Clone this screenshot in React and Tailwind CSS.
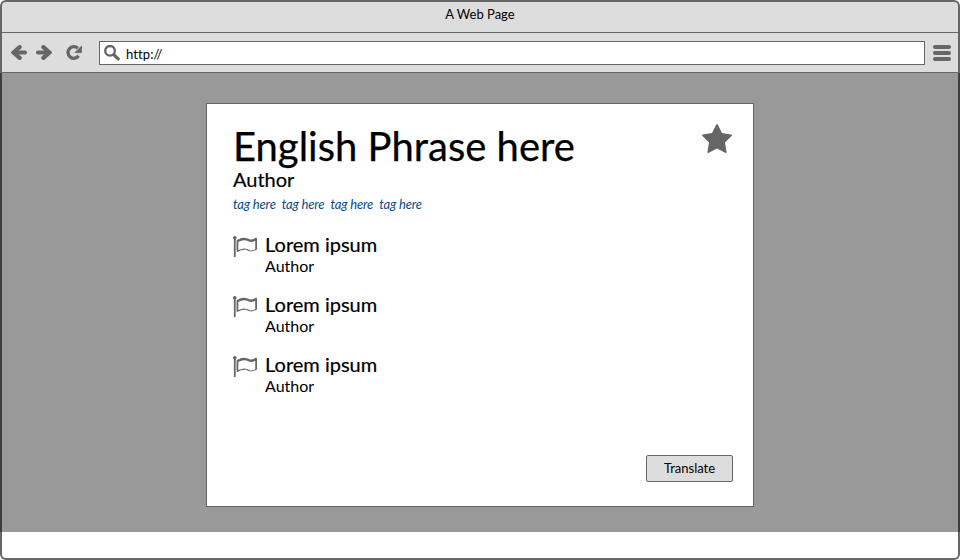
const ICONS = {
  star: {
    box: '64 32 1664 1587',
    d: 'M1728 647q0 22-26 48l-363 354 86 500q1 7 1 20 0 21-10.5 35.5t-30.5 14.5q-19 0-40-12l-449-236-449 236q-22 12-40 12-21 0-31.5-14.5t-10.5-35.5q0-6 2-20l86-500-364-354q-25-27-25-48 0-37 56-46l502-73 225-455q19-41 49-41t49 41l225 455 502 73q56 9 56 46z',
  },
  flag: {
    box: '64 128 1728 1536',
    d: 'M1664 1095v-616q-169 91-306 91-82 0-145-32-100-49-184-76.5t-178-27.5q-173 0-403 127v599q245-113 433-113 55 0 103.5 7.5t98 26 77 31 82.5 39.5l28 14q44 22 101 22 120 0 293-92zm-1344-839q0 35-17.5 64t-46.5 46v1266q0 14-9 23t-23 9h-64q-14 0-23-9t-9-23v-1266q-29-17-46.5-46t-17.5-64q0-53 37.5-90.5t90.5-37.5 90.5 37.5 37.5 90.5zm1472 64v763q0 39-35 57-10 5-17 9-218 116-369 116-88 0-158-35l-28-14q-64-33-99-48t-91-29-114-14q-102 0-235.5 44t-228.5 102q-15 9-33 9-16 0-32-8-32-19-32-56v-742q0-35 31-55 35-21 78.5-42.5t114-52 152.5-49.5 155-19q112 0 209 31t209 86q38 19 89 19 122 0 310-112 22-12 31-17 31-16 62 2 31 20 31 55z',
  },
};

function Icon({ name, className }) {
  const { box, d } = ICONS[name];
  return (
    <svg viewBox={box} preserveAspectRatio="none" fill="currentColor" className={`shrink-0 text-[#666] ${className}`}>
      <path d={d} />
    </svg>
  );
}

function Arrow({ className }) {
  return (
    <svg viewBox="0 0 16 15" fill="none" stroke="#666" className={`h-[15px] w-4 shrink-0 ${className}`}>
      <path d="M8.6 2.2 2.6 7.5l6 5.3" strokeWidth="4.3" strokeLinecap="round" />
      <path d="M3.5 7.5h10.6" strokeWidth="3.8" strokeLinecap="round" />
    </svg>
  );
}

function Reload({ className }) {
  return (
    <svg viewBox="0 0 16 15" className={`h-[15px] w-4 shrink-0 ${className}`}>
      <path d="M12.6 10.8A5.8 5.8 0 1 1 11.8 3.3" fill="none" stroke="#666" strokeWidth="3.3" />
      <path d="M15.6 1v6.6H9z" fill="#666" stroke="#666" strokeWidth="0.8" strokeLinejoin="round" />
    </svg>
  );
}

function Search({ className }) {
  return (
    <svg viewBox="0 0 16 16" fill="none" stroke="#666" className={`h-4 w-4 shrink-0 ${className}`}>
      <circle cx="6" cy="5.8" r="4.8" strokeWidth="2.3" />
      <path d="m10 9.8 4.2 4" strokeWidth="3.2" strokeLinecap="round" />
    </svg>
  );
}

function Translation() {
  return (
    <li className="flex h-[60px]">
      <Icon name="flag" className="mt-1 h-[21px] w-6" />
      <div className="ml-2">
        <p className="h-6 text-[20px] leading-6 [-webkit-text-stroke:0.2px]">Lorem ipsum</p>
        <p className="h-5 text-[16px] leading-[19px]">Author</p>
      </div>
    </li>
  );
}

export default function App() {
  return (
    <div className="flex h-[560px] w-[960px] flex-col overflow-hidden whitespace-nowrap rounded-[6px] bg-[#666] font-['Lato',sans-serif] text-black">
      <header className="mx-0.5 mt-0.5 h-[30px] shrink-0 rounded-t-[4px] bg-[#ddd] text-center text-[13px] leading-6">
        A Web Page
      </header>
      <nav className="mx-0.5 mt-px flex h-[39px] shrink-0 items-start bg-[#ddd] pt-2">
        <Arrow className="ml-[9px] mt-1" />
        <Arrow className="ml-[9px] mt-1 rotate-180" />
        <Reload className="ml-[14px] mt-1" />
        <div className="ml-[17px] flex h-6 w-[826px] items-start border border-[#666] bg-white">
          <Search className="ml-1 mt-[3px]" />
          <span className="ml-1.5 text-[13px] leading-6 tracking-[0.1px] [font-variant-ligatures:none]">http://</span>
        </div>
        <div className="ml-2 mt-1 flex flex-col gap-[2px]">
          <span className="h-1 w-[18px] rounded-full bg-[#666]" />
          <span className="h-1 w-[18px] rounded-full bg-[#666]" />
          <span className="h-1 w-[18px] rounded-full bg-[#666]" />
        </div>
      </nav>
      <div className="mt-px h-[459px] shrink-0 bg-[#3d3d3d] px-0.5">
        <main className="flex h-full justify-center bg-[#999] pt-[30px]">
          <section className="flex h-[404px] w-[548px] flex-col border border-[#666] bg-white pl-[26px] pr-5 pt-5">
            <div className="flex h-[45px] justify-between">
              <h1 className="text-[40px] leading-[45px] [-webkit-text-stroke:0.25px]">English Phrase here</h1>
              <Icon name="star" className="mr-px h-[29px] w-[30px]" />
            </div>
            <p className="h-[23px] text-[20px] leading-5 [-webkit-text-stroke:0.2px]">Author</p>
            <div className="flex h-6 gap-[6px] text-[13px] italic leading-6 tracking-[-0.16px] text-[#074b8c]">
              <span>tag here</span>
              <span>tag here</span>
              <span>tag here</span>
              <span>tag here</span>
            </div>
            <ul className="mt-4">
              <Translation />
              <Translation />
              <Translation />
            </ul>
            <button className="mb-6 mt-auto h-[27px] w-[87px] self-end rounded-[2px] border border-[#666] bg-[#ddd] text-[13px] leading-[25px]">
              Translate
            </button>
          </section>
        </main>
      </div>
      <footer className="mx-0.5 h-[26px] shrink-0 rounded-b-[4px] bg-white" />
    </div>
  );
}
